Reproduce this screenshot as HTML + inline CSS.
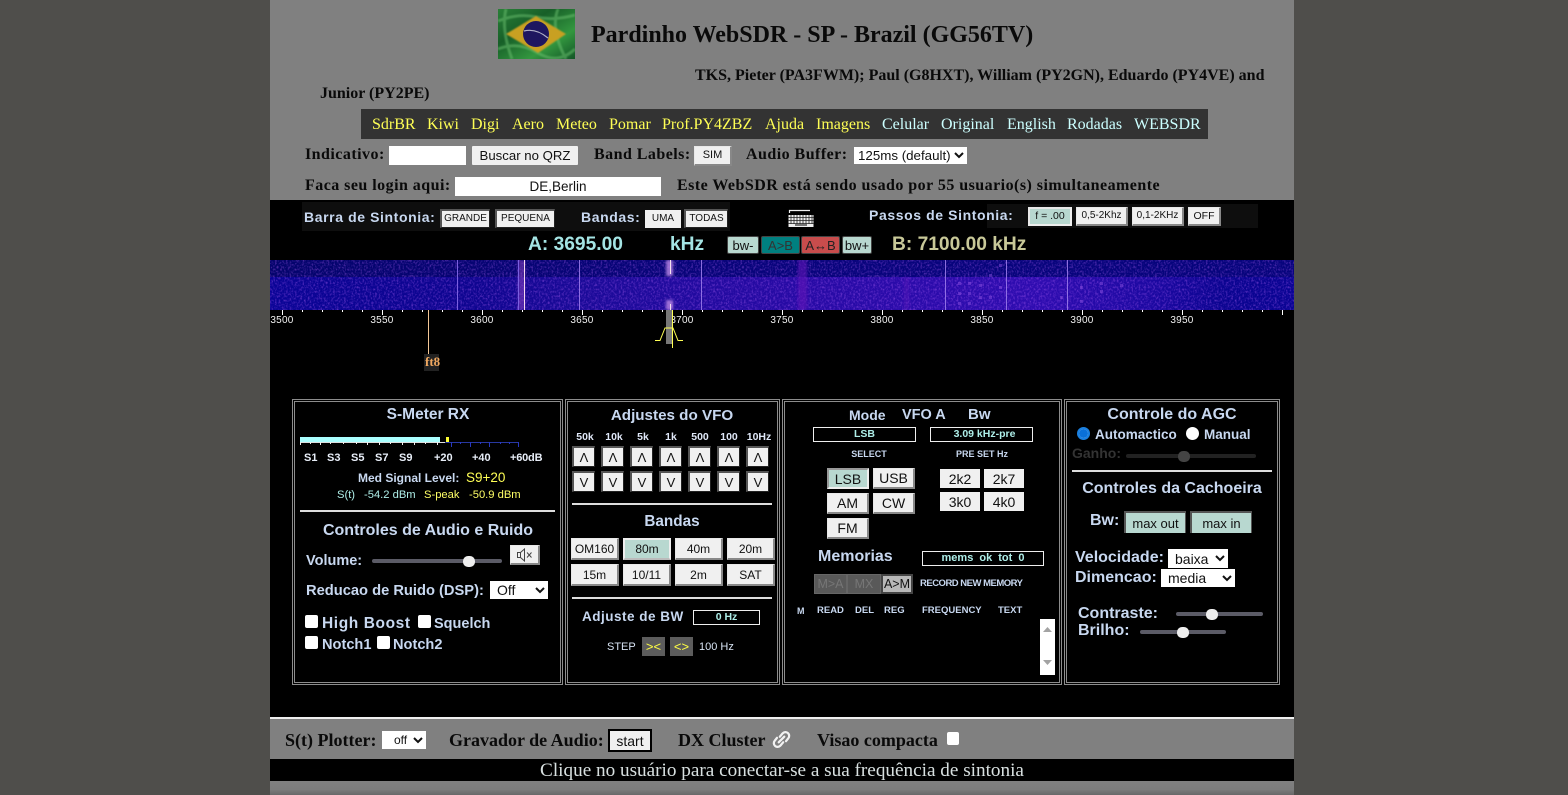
<!DOCTYPE html>
<html><head><meta charset="utf-8"><title>Pardinho WebSDR</title>
<style>
html,body{margin:0;padding:0;width:1568px;height:795px;overflow:hidden;background:#4f4e4b}
*{box-sizing:border-box}
.a{position:absolute}
.t{position:absolute;white-space:nowrap;line-height:20px;height:20px;font-family:"Liberation Sans",sans-serif;font-weight:bold;color:#c8d8f0}
.c{transform:translateX(-50%)}
.s{font-family:"Liberation Serif",serif;color:#0a0a0a;font-size:16px}
.m{font-family:"Liberation Serif",serif;font-weight:normal;font-size:16px;top:115px}
.y{color:#ffff55}.b{color:#ccffff}
.p{position:absolute;top:399px;height:286px;border:3px double #8c8c8c}
.btn{position:absolute;background:#f0f0f0;color:#111;font:12px/1 "Liberation Sans",sans-serif;display:flex;align-items:center;justify-content:center;white-space:nowrap}
.o{border-style:solid;border-width:1px 2px 2px 1px;border-color:#e8e8e8 #888 #888 #e8e8e8}
.i{border-style:solid;border-width:2px 1px 1px 2px;border-color:#555 #222 #222 #555}
.hr{position:absolute;height:2px;background:#ddd}
.box{position:absolute;border:1px solid #eee;color:#aeeee8;font:bold 11.5px/1 "Liberation Sans",sans-serif;display:flex;align-items:center;justify-content:center;white-space:nowrap}
.tr{position:absolute;height:4px;background:#5b5b66;border-radius:2px}
.th{position:absolute;width:12px;height:11px;background:#eee;border-radius:5px}
.cb{position:absolute;width:13px;height:13px;background:#fff;border-radius:2px}
select{position:absolute;background:#fff;border:0;padding:0 0 0 3px;margin:0;color:#111;font:14px "Liberation Sans",sans-serif;border-radius:0}
.tk{font:10px/12px "Liberation Sans",sans-serif;color:#f2f2f2;position:absolute;top:315px;width:40px;text-align:center;letter-spacing:.25px}
.ls{letter-spacing:.46px;top:145px}
.sm{font-size:18px;top:730px}
.sl{font-size:11px;top:448px;color:#e8eef8}
.hd{font-size:10.5px;top:427px;color:#e0e8f8}
</style></head><body>
<div class="a" style="left:270px;top:0;width:1024px;height:200px;background:#808080"></div>
<div class="a" style="left:270px;top:200px;width:1024px;height:517px;background:#000"></div>
<div class="a" style="left:270px;top:717px;width:1024px;height:2px;background:#eee"></div>
<div class="a" style="left:270px;top:719px;width:1024px;height:40px;background:#808080"></div>
<div class="a" style="left:270px;top:759px;width:1024px;height:22px;background:#000"></div>
<div class="a" style="left:270px;top:781px;width:1024px;height:14px;background:linear-gradient(#808080,#7c7c7c 60%,#686868)"></div>

<svg class="a" style="left:498px;top:9px" width="77" height="50" viewBox="0 0 77 50"><defs><linearGradient id="g" x1="0" y1="0" x2="1" y2="1"><stop offset="0" stop-color="#2a8038"/><stop offset=".35" stop-color="#175f28"/><stop offset=".7" stop-color="#33973f"/><stop offset="1" stop-color="#125526"/></linearGradient><filter id="bl"><feGaussianBlur stdDeviation=".9"/></filter></defs><rect width="77" height="50" fill="url(#g)"/><path d="M0 12Q20 4 38 8T77 6M0 40Q20 32 40 44T77 40M60 0Q52 20 68 50M8 0Q3 20 14 50" stroke="#6cc070" stroke-width="3" fill="none" opacity=".5" filter="url(#bl)"/><path d="M8 25L38 7L68 25L40 44Z" fill="#c8a024" filter="url(#bl)"/><circle cx="38" cy="25" r="13" fill="#1e1660"/><path d="M26 22Q38 19 50 29" stroke="#b0b0c8" stroke-width="1.2" fill="none"/></svg>

<div class="t s" style="left:591px;top:25px;font-size:24px">Pardinho WebSDR - SP - Brazil (GG56TV)</div>
<div class="t s" style="left:695px;top:66px;font-size:16px">TKS, Pieter (PA3FWM); Paul (G8HXT), William (PY2GN), Eduardo (PY4VE) and</div>
<div class="t s" style="left:320px;top:84px;font-size:16px">Junior (PY2PE)</div>

<div class="a" style="left:361px;top:109px;width:847px;height:30px;background:#333"></div>
<div class="t m y" style="left:372px">SdrBR</div><div class="t m y" style="left:427px">Kiwi</div><div class="t m y" style="left:471px">Digi</div><div class="t m y" style="left:512px">Aero</div><div class="t m y" style="left:556px">Meteo</div><div class="t m y" style="left:609px">Pomar</div><div class="t m y" style="left:662px">Prof.PY4ZBZ</div><div class="t m y" style="left:765px">Ajuda</div><div class="t m y" style="left:816px">Imagens</div><div class="t m b" style="left:882px">Celular</div><div class="t m b" style="left:941px">Original</div><div class="t m b" style="left:1007px">English</div><div class="t m b" style="left:1067px">Rodadas</div><div class="t m b" style="left:1134px">WEBSDR</div>

<div class="t s ls" style="left:305px">Indicativo:</div>
<div class="a" style="left:389px;top:146px;width:77px;height:19px;background:#fff"></div>
<div class="btn" style="left:472px;top:146px;width:106px;height:19px;font-size:13.2px;border-radius:1px">Buscar no QRZ</div>
<div class="t s ls" style="left:594px">Band Labels:</div>
<div class="btn o" style="left:694px;top:146px;width:38px;height:20px;font-size:11px">SIM</div>
<div class="t s ls" style="left:746px">Audio Buffer:</div>
<select style="left:854px;top:147px;width:113px;height:17px;font-size:13.33px;padding:0"><option>125ms (default)</option></select>

<div class="t s ls" style="left:305px;top:176px">Faca seu login aqui:</div>
<div class="btn" style="left:455px;top:177px;width:206px;height:19px;background:#fff;font-size:13.5px">DE,Berlin</div>
<div class="t s ls" style="left:677px;top:176px">Este WebSDR está sendo usado por 55 usuario(s) simultaneamente</div>

<div class="a" style="left:302px;top:202px;width:428px;height:29px;background:#0e0e0e"></div>
<div class="a" style="left:987px;top:204px;width:271px;height:24px;background:#0e0e0e"></div>
<div class="t" style="left:304px;top:207px;font-size:14px;letter-spacing:.6px">Barra de Sintonia:</div>
<div class="btn i" style="left:440px;top:209px;width:50px;height:19px;font-size:10px">GRANDE</div>
<div class="btn i" style="left:495px;top:209px;width:60px;height:19px;font-size:10px">PEQUENA</div>
<div class="t" style="left:581px;top:207px;font-size:14px;letter-spacing:.6px">Bandas:</div>
<div class="btn" style="left:645px;top:210px;width:36px;height:18px;font-size:10px">UMA</div>
<div class="btn i" style="left:684px;top:209px;width:44px;height:19px;font-size:10px">TODAS</div>
<svg class="a" style="left:788px;top:208px" width="26" height="20" viewBox="0 0 26 20"><path d="M1.500 5V2.500H22" stroke="#eee" stroke-width="1.2" fill="none"/><rect x="0.5" y="7" width="25" height="12" fill="#eee"/><path d="M0 9.500H26M0 12.500H26M0 15.500H26M3 7V16M6 7V16M9 7V16M12 7V16M15 7V16M18 7V16M21 7V16M24 7V16" stroke="#222" stroke-width=".8"/><rect x="7" y="16" width="12" height="2" fill="#777"/></svg>
<div class="t" style="left:869px;top:205px;font-size:14px;letter-spacing:.6px">Passos de Sintonia:</div>
<div class="btn o" style="left:1028px;top:207px;width:44px;height:19px;font-size:10.5px;background:#b8d8d0;border-color:#e8e8e8 #eee #eee #e8e8e8;border-width:2px">f = .00</div>
<div class="btn o" style="left:1076px;top:207px;width:52px;height:19px;font-size:10px">0,5-2Khz</div>
<div class="btn o" style="left:1132px;top:207px;width:52px;height:19px;font-size:10px">0,1-2KHz</div>
<div class="btn o" style="left:1188px;top:207px;width:33px;height:19px;font-size:10.5px">OFF</div>

<div class="t" style="left:528px;top:235px;font-size:19.2px;color:#a4e4e4">A: 3695.00</div>
<div class="t" style="left:670px;top:235px;font-size:19.2px;color:#a4e4e4">kHz</div>
<div class="btn" style="left:727px;top:236px;width:32px;height:18px;background:#b8d8d0;font-size:13px;border:1px solid #444;border-radius:2px">bw-</div>
<div class="btn" style="left:761px;top:236px;width:39px;height:18px;background:#008080;font-size:13px;color:#333;border:1px solid #444;border-radius:2px">A&gt;B</div>
<div class="btn" style="left:801px;top:236px;width:39px;height:18px;background:#c84c4c;font-size:13px;color:#222;border:1px solid #444;border-radius:2px">A↔B</div>
<div class="btn" style="left:842px;top:236px;width:30px;height:18px;background:#b8d8d0;font-size:13px;border:1px solid #444;border-radius:2px">bw+</div>
<div class="t" style="left:892px;top:235px;font-size:19.2px;color:#c8c898">B: 7100.00 kHz</div>

<svg class="a" style="left:270px;top:260px" width="1024" height="50" viewBox="0 0 1024 50">
<defs>
<linearGradient id="h" x1="0" x2="1" y1="0" y2="0"><stop offset="0" stop-color="#0a0496"/><stop offset=".2" stop-color="#0e0590"/><stop offset=".3" stop-color="#1a0a98"/><stop offset=".5" stop-color="#260aa4"/><stop offset=".75" stop-color="#2e0cb0"/><stop offset=".87" stop-color="#1a08a0"/><stop offset=".93" stop-color="#0a0490"/><stop offset="1" stop-color="#0a0494"/></linearGradient>
<linearGradient id="v" x1="0" x2="1" y1="0" y2="0"><stop offset="0" stop-color="#04046c"/><stop offset=".5" stop-color="#08047c"/><stop offset="1" stop-color="#06047c"/></linearGradient>
<filter id="n" x="0" y="0" width="100%" height="100%"><feTurbulence type="fractalNoise" baseFrequency=".55 .45" numOctaves="2" seed="4"/><feColorMatrix values="0 0 0 0 .55  0 0 0 0 .15  0 0 0 0 1  1.8 0 0 0 -.8"/></filter>
<filter id="bb"><feGaussianBlur stdDeviation="1.2"/></filter>
</defs>
<rect width="1024" height="50" fill="url(#h)"/>
<rect width="1024" height="17" fill="url(#v)"/>
<rect width="1024" height="50" filter="url(#n)" opacity=".55"/>
<g filter="url(#bb)"><rect x="528" y="0" width="9" height="50" fill="#6018b8" opacity=".6"/><rect x="396" y="0" width="7" height="16" fill="#b080e0" opacity=".85"/><rect x="396" y="40" width="7" height="10" fill="#b080e0" opacity=".85"/><rect x="248" y="0" width="7" height="50" fill="#9040c0" opacity=".5"/><rect x="634" y="17" width="5" height="33" fill="#5818b8" opacity=".5"/></g>
<g fill="#8a50e0" opacity=".5"><rect x="688" y="22" width="3" height="3"/><rect x="688" y="32" width="3" height="3"/><rect x="688" y="42" width="3" height="3"/><rect x="698" y="22" width="3" height="3"/><rect x="698" y="32" width="3" height="3"/><rect x="698" y="42" width="3" height="3"/><rect x="709" y="24" width="3" height="3"/><rect x="709" y="36" width="3" height="3"/><rect x="719" y="14" width="3" height="3"/><rect x="719" y="36" width="3" height="3"/><rect x="729" y="4" width="3" height="3"/><rect x="729" y="26" width="3" height="3"/><rect x="790" y="36" width="3" height="3"/><rect x="810" y="26" width="3" height="3"/><rect x="810" y="40" width="3" height="3"/><rect x="830" y="22" width="3" height="3"/><rect x="830" y="30" width="3" height="3"/><rect x="850" y="24" width="3" height="3"/></g>
<g stroke-width="1"><path d="M309.500 0V50M431.500 0V50M675.500 0V50M736.500 0V50M797.500 0V50" stroke="#a080ee" opacity=".85"/><path d="M187.500 0V50M248.500 0V50" stroke="#7a60e0"/><path d="M254.500 0V50" stroke="#f4d8f0"/><path d="M400.500 0V14M400.500 44V50" stroke="#f4e0f0"/></g>
</svg>

<svg class="a" style="left:270px;top:310px" width="1024" height="6" viewBox="0 0 1024 6"><path d="M12.500 0V5M112.500 0V5M212.500 0V5M312.500 0V5M412.500 0V5M512.500 0V5M612.500 0V5M712.500 0V5M812.500 0V5M912.500 0V5M1012.500 0V5" stroke="#fff"/><path d="M32.500 0V2M52.500 0V2M72.500 0V2M92.500 0V2M132.500 0V2M152.500 0V2M172.500 0V2M192.500 0V2M232.500 0V2M252.500 0V2M272.500 0V2M292.500 0V2M332.500 0V2M352.500 0V2M372.500 0V2M392.500 0V2M432.500 0V2M452.500 0V2M472.500 0V2M492.500 0V2M532.500 0V2M552.500 0V2M572.500 0V2M592.500 0V2M632.500 0V2M652.500 0V2M672.500 0V2M692.500 0V2M732.500 0V2M752.500 0V2M772.500 0V2M792.500 0V2M832.500 0V2M852.500 0V2M872.500 0V2M892.500 0V2M932.500 0V2M952.500 0V2M972.500 0V2M992.500 0V2" stroke="#fff"/></svg>
<div class="tk" style="left:262px">3500</div><div class="tk" style="left:362px">3550</div><div class="tk" style="left:462px">3600</div><div class="tk" style="left:562px">3650</div><div class="tk" style="left:662px">3700</div><div class="tk" style="left:762px">3750</div><div class="tk" style="left:862px">3800</div><div class="tk" style="left:962px">3850</div><div class="tk" style="left:1062px">3900</div><div class="tk" style="left:1162px">3950</div>

<div class="a" style="left:666px;top:310px;width:6px;height:34px;background:#777"></div>
<svg class="a" style="left:650px;top:308px" width="40" height="42" viewBox="0 0 40 42"><path d="M5 32.500H10L15 20H23L28 32.500H33M22.500 2V40" stroke="#ffff55" fill="none" stroke-width="1"/></svg>
<div class="a" style="left:428px;top:310px;width:1px;height:44px;background:#f4c898"></div>
<div class="a" style="left:424px;top:354px;width:15px;height:17px;background:#222"></div>
<div class="t" style="left:425px;top:352px;font:bold 13px/20px 'Liberation Serif',serif;color:#f0a860">ft8</div>

<div class="p" style="left:292px;width:271px"></div>
<div class="p" style="left:565px;width:215px"></div>
<div class="p" style="left:782px;width:280px"></div>
<div class="p" style="left:1064px;width:216px"></div>

<!-- panel 1 -->
<div class="t c" style="left:428px;top:405px;font-size:15.5px">S-Meter RX</div>
<div class="a" style="left:300px;top:437px;width:140px;height:5px;background:#aaffff"></div>
<div class="a" style="left:446px;top:437px;width:3px;height:6px;background:#ffff33"></div>
<svg class="a" style="left:300px;top:442px" width="220" height="7" viewBox="0 0 220 7"><path d="M0 .5H145" stroke="#ddd"/><path d="M145 .5H219" stroke="#2838a0"/><path d="M.5 0V3M10.500 0V2M20.500 0V3M30.500 0V2M43.500 0V2M56.500 0V2M67.500 0V3M79.500 0V3M90.500 0V2M102.500 0V3M114.500 0V3M125.500 0V2M137.500 0V3" stroke="#eee"/><path d="M151.500 0V5M160.500 0V2M170.500 0V5M180.500 0V2M189.500 0V5M200.500 0V2M209.500 0V2M218.500 0V5" stroke="#2838c0"/></svg>
<div class="t sl" style="left:304px">S1</div><div class="t sl" style="left:327px">S3</div><div class="t sl" style="left:351px">S5</div><div class="t sl" style="left:375px">S7</div><div class="t sl" style="left:399px">S9</div><div class="t sl" style="left:434px">+20</div><div class="t sl" style="left:472px">+40</div><div class="t sl" style="left:510px;letter-spacing:-.2px">+60dB</div>
<div class="t" style="left:358px;top:468px;font-size:12px">Med Signal Level:</div>
<div class="t" style="left:466px;top:468px;font-size:13.5px;color:#ffff55;font-weight:normal">S9+20</div>
<div class="t" style="left:337px;top:485px;font-size:11.2px;color:#aeeee8;font-weight:normal">S(t)</div>
<div class="t" style="left:364px;top:485px;font-size:11.2px;color:#aeeee8;font-weight:normal">-54.2 dBm</div>
<div class="t" style="left:424px;top:485px;font-size:11.2px;color:#ffff66;font-weight:normal">S-peak</div>
<div class="t" style="left:469px;top:485px;font-size:11.2px;color:#ffff66;font-weight:normal">-50.9 dBm</div>
<div class="hr" style="left:300px;top:510px;width:255px"></div>
<div class="t c" style="left:428px;top:521px;font-size:16px">Controles de Audio e Ruido</div>
<div class="t" style="left:306px;top:551px;font-size:14.5px">Volume:</div>
<div class="tr" style="left:372px;top:559px;width:130px"></div><div class="th" style="left:463px;top:556px"></div>
<div class="btn o" style="left:510px;top:545px;width:30px;height:20px"><svg width="18" height="14" viewBox="0 0 18 14"><path d="M1.500 4.500H4.500V9.500H1.500ZM4.500 4.500L8.500 1V13L4.500 9.500M11 4.500L15.500 9.500M15.500 4.500L11 9.500" stroke="#444" fill="none"/></svg></div>
<div class="t" style="left:306px;top:581px;font-size:14.7px">Reducao de Ruido (DSP):</div>
<select style="left:490px;top:581px;width:58px;height:18px"><option>Off</option></select>
<div class="cb" style="left:305px;top:615px"></div>
<div class="t" style="left:322px;top:614px;font-size:15.5px;letter-spacing:.6px">High Boost</div>
<div class="cb" style="left:418px;top:615px"></div>
<div class="t" style="left:434px;top:614px;font-size:14.5px">Squelch</div>
<div class="cb" style="left:305px;top:636px"></div>
<div class="t" style="left:322px;top:635px;font-size:14.6px">Notch1</div>
<div class="cb" style="left:377px;top:636px"></div>
<div class="t" style="left:393px;top:635px;font-size:14.6px">Notch2</div>

<!-- panel 2 -->
<div class="t c" style="left:672px;top:406px;font-size:15.2px">Adjustes do VFO</div>
<div class="t c hd" style="left:585px">50k</div><div class="t c hd" style="left:614px">10k</div><div class="t c hd" style="left:643px">5k</div><div class="t c hd" style="left:671px">1k</div><div class="t c hd" style="left:700px">500</div><div class="t c hd" style="left:729px">100</div><div class="t c hd" style="left:759px">10Hz</div>
<div class="btn i" style="left:572px;top:446px;width:23px;height:21px;font-size:13px">Λ</div><div class="btn i" style="left:601px;top:446px;width:23px;height:21px;font-size:13px">Λ</div><div class="btn i" style="left:630px;top:446px;width:23px;height:21px;font-size:13px">Λ</div><div class="btn i" style="left:659px;top:446px;width:23px;height:21px;font-size:13px">Λ</div><div class="btn i" style="left:688px;top:446px;width:23px;height:21px;font-size:13px">Λ</div><div class="btn i" style="left:717px;top:446px;width:23px;height:21px;font-size:13px">Λ</div><div class="btn i" style="left:746px;top:446px;width:23px;height:21px;font-size:13px">Λ</div>
<div class="btn i" style="left:572px;top:471px;width:23px;height:21px;font-size:13px">V</div><div class="btn i" style="left:601px;top:471px;width:23px;height:21px;font-size:13px">V</div><div class="btn i" style="left:630px;top:471px;width:23px;height:21px;font-size:13px">V</div><div class="btn i" style="left:659px;top:471px;width:23px;height:21px;font-size:13px">V</div><div class="btn i" style="left:688px;top:471px;width:23px;height:21px;font-size:13px">V</div><div class="btn i" style="left:717px;top:471px;width:23px;height:21px;font-size:13px">V</div><div class="btn i" style="left:746px;top:471px;width:23px;height:21px;font-size:13px">V</div>
<div class="hr" style="left:572px;top:503px;width:200px"></div>
<div class="t c" style="left:672px;top:512px;font-size:15.3px">Bandas</div>
<div class="btn o" style="left:571px;top:538px;width:48px;height:22px">OM160</div><div class="btn o" style="left:623px;top:538px;width:48px;height:22px;background:#b8d8d0;border-color:#eee #eee #bbb #eee;border-width:2px">80m</div><div class="btn o" style="left:675px;top:538px;width:48px;height:22px">40m</div><div class="btn o" style="left:727px;top:538px;width:48px;height:22px">20m</div>
<div class="btn o" style="left:571px;top:564px;width:48px;height:22px">15m</div><div class="btn o" style="left:623px;top:564px;width:48px;height:22px">10/11</div><div class="btn o" style="left:675px;top:564px;width:48px;height:22px">2m</div><div class="btn o" style="left:727px;top:564px;width:48px;height:22px">SAT</div>
<div class="hr" style="left:572px;top:597px;width:200px"></div>
<div class="t" style="left:582px;top:607px;font-size:13.5px;letter-spacing:.5px">Adjuste de BW</div>
<div class="box" style="left:693px;top:610px;width:67px;height:15px;font-size:10.5px">0 Hz</div>
<div class="t" style="left:607px;top:637px;font-size:11px;font-weight:normal;color:#d8e4f4">STEP</div>
<div class="btn" style="left:642px;top:637px;width:23px;height:19px;background:#5c5c5c;color:#ffff44;font-size:13px">&gt;&lt;</div>
<div class="btn" style="left:670px;top:637px;width:23px;height:19px;background:#5c5c5c;color:#ffff44;font-size:13px">&lt;&gt;</div>
<div class="t" style="left:699px;top:637px;font-size:11px;font-weight:normal;color:#d8e4f4">100 Hz</div>

<!-- panel 3 -->
<div class="t" style="left:849px;top:405px;font-size:14px">Mode</div>
<div class="t" style="left:902px;top:405px;font-size:14.5px">VFO A</div>
<div class="t" style="left:968px;top:405px;font-size:15px">Bw</div>
<div class="box" style="left:813px;top:427px;width:103px;height:15px;font-size:10.5px">LSB</div>
<div class="box" style="left:930px;top:427px;width:103px;height:15px;font-size:10.5px;padding-left:6px">3.09 kHz-pre</div>
<div class="t c" style="left:869px;top:444px;font-size:9px">SELECT</div>
<div class="t c" style="left:982px;top:444px;font-size:9px">PRE SET Hz</div>
<div class="btn o" style="left:827px;top:468px;width:42px;height:21px;font-size:14px;background:#b8d8d0;border-color:#999 #eee #eee #999;border-width:2px">LSB</div>
<div class="btn o" style="left:873px;top:468px;width:42px;height:21px;font-size:14px">USB</div>
<div class="btn o" style="left:827px;top:493px;width:42px;height:21px;font-size:14px">AM</div>
<div class="btn o" style="left:873px;top:493px;width:42px;height:21px;font-size:14px">CW</div>
<div class="btn o" style="left:827px;top:518px;width:42px;height:21px;font-size:14px">FM</div>
<div class="btn" style="left:940px;top:469px;width:40px;height:19px;font-size:14px">2k2</div>
<div class="btn" style="left:984px;top:469px;width:40px;height:19px;font-size:14px">2k7</div>
<div class="btn" style="left:940px;top:492px;width:40px;height:19px;font-size:14px">3k0</div>
<div class="btn" style="left:984px;top:492px;width:40px;height:19px;font-size:14px">4k0</div>
<div class="t" style="left:818px;top:547px;font-size:16px">Memorias</div>
<div class="box" style="left:922px;top:551px;width:122px;height:15px;font-size:11px;word-spacing:3px">mems ok tot 0</div>
<div class="btn" style="left:814px;top:574px;width:33px;height:20px;background:#595959;color:#767676;font-size:12.5px;border:1px solid #666">M&gt;A</div>
<div class="btn" style="left:847px;top:574px;width:34px;height:20px;background:#595959;color:#767676;font-size:12.5px;border:1px solid #666">MX</div>
<div class="btn" style="left:881px;top:574px;width:32px;height:20px;background:#b8b8b8;color:#111;font-size:12.5px;border:2px solid #444">A&gt;M</div>
<div class="t" style="left:920px;top:574px;font-size:9.5px;letter-spacing:-.5px">RECORD NEW MEMORY</div>
<div class="t" style="left:797px;top:601px;font-size:9px">M</div><div class="t" style="left:817px;top:601px;font-size:9.5px">READ</div><div class="t" style="left:855px;top:601px;font-size:9.5px">DEL</div><div class="t" style="left:884px;top:601px;font-size:9.5px">REG</div><div class="t" style="left:922px;top:601px;font-size:9.5px">FREQUENCY</div><div class="t" style="left:998px;top:601px;font-size:9.5px">TEXT</div>
<div class="a" style="left:1040px;top:619px;width:15px;height:56px;background:#fff"></div>
<svg class="a" style="left:1040px;top:619px" width="15" height="56" viewBox="0 0 15 56"><path d="M3 13L7.500 8L12 13ZM3 41L7.500 46L12 41Z" fill="#a3a3a3"/></svg>

<!-- panel 4 -->
<div class="t c" style="left:1172px;top:405px;font-size:16px">Controle do AGC</div>
<div class="a" style="left:1077px;top:427px;width:13px;height:13px;border-radius:50%;background:#fff;border:2px solid #1a80e0"><div style="width:9px;height:9px;border-radius:50%;background:#0a70d8"></div></div>
<div class="t" style="left:1095px;top:425px;font-size:13.5px">Automactico</div>
<div class="a" style="left:1186px;top:427px;width:13px;height:13px;border-radius:50%;background:#fff"></div>
<div class="t" style="left:1204px;top:425px;font-size:13.5px">Manual</div>
<div class="t" style="left:1072px;top:443px;font-size:14px;color:#333">Ganho:</div>
<div class="tr" style="left:1126px;top:454px;width:130px;background:#222"></div><div class="th" style="left:1178px;top:451px;background:#444"></div>
<div class="hr" style="left:1072px;top:470px;width:200px"></div>
<div class="t c" style="left:1172px;top:479px;font-size:16px">Controles da Cachoeira</div>
<div class="t" style="left:1090px;top:511px;font-size:16px">Bw:</div>
<div class="btn" style="left:1124px;top:511px;width:62px;height:22px;font-size:13px;background:#b8d8d0;border-style:solid;border-width:2px 1px 0 2px;border-color:#555 #555 #000 #555">max out</div>
<div class="btn" style="left:1190px;top:511px;width:62px;height:22px;font-size:13px;background:#b8d8d0;border-style:solid;border-width:2px 1px 0 2px;border-color:#555 #555 #000 #555">max in</div>
<div class="t" style="left:1075px;top:548px;font-size:16px">Velocidade:</div>
<select style="left:1168px;top:549px;width:60px;height:19px"><option>baixa</option></select>
<div class="t" style="left:1075px;top:568px;font-size:16px">Dimencao:</div>
<select style="left:1161px;top:569px;width:74px;height:18px"><option>media</option></select>
<div class="t" style="left:1078px;top:604px;font-size:16px">Contraste:</div>
<div class="tr" style="left:1176px;top:612px;width:87px"></div><div class="th" style="left:1206px;top:609px"></div>
<div class="t" style="left:1078px;top:621px;font-size:16px">Brilho:</div>
<div class="tr" style="left:1140px;top:630px;width:86px"></div><div class="th" style="left:1177px;top:627px"></div>

<!-- bottom -->
<div class="t s sm" style="left:285px">S(t) Plotter:</div>
<select style="left:382px;top:731px;width:44px;height:18px;padding-left:8px;font-size:12px"><option>off</option></select>
<div class="t s sm" style="left:449px">Gravador de Audio:</div>
<div class="btn" style="left:608px;top:729px;width:44px;height:23px;border:2px solid #000;font-size:14px">start</div>
<div class="t s sm" style="left:678px">DX Cluster</div>
<svg class="a" style="left:772px;top:730px" width="19" height="19" viewBox="1 1 17 16"><path d="M8 6.500L10.500 3.500A3.300 3.300 0 0 1 15.500 8L13.500 10.500M11 11.500L8.500 14.500A3.300 3.300 0 0 1 3.500 10L5.500 7.500M7 11.500L12 6.500" stroke="#f2f2f2" stroke-width="2" fill="none" stroke-linecap="round"/></svg>
<div class="t s sm" style="left:817px">Visao compacta</div>
<div class="cb" style="left:947px;top:732px;width:12px;height:13px"></div>
<div class="t c" style="left:782px;top:761px;font:normal 19.2px/20px 'Liberation Serif',serif;color:#d8e0e0">Clique no usuário para conectar-se a sua frequência de sintonia</div>
</body></html>
